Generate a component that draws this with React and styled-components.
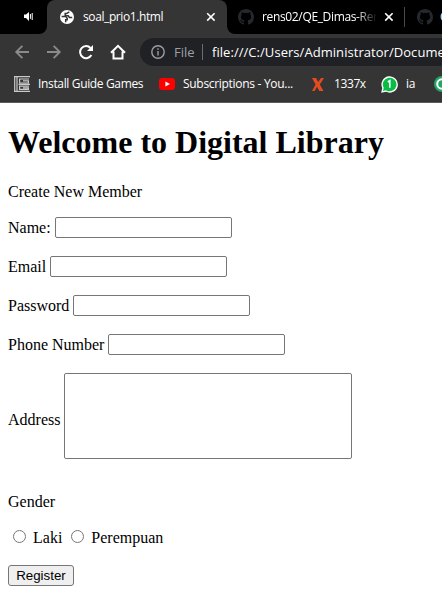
import React from "react";
import styled, { createGlobalStyle } from "styled-components";

const GlobalStyle = createGlobalStyle`
  * { box-sizing: border-box; }
  html, body { margin: 0; background: #fff; overflow: hidden; }
`;

const Window = styled.div`
  width: 442px;
  height: 611px;
  overflow: hidden;
  background: #fff;
`;

const Chrome = styled.header`
  height: 103px;
  background: #353535;
  border-bottom: 1px solid #5a5a5a;
  font-family: "Open Sans", "Noto Sans", sans-serif;
  font-size: 12px;
  color: #fff;
  white-space: nowrap;
  overflow: hidden;
`;

const TabStrip = styled.div`
  height: 34px;
  display: flex;
  background: #353535;
`;

const MutedTab = styled.div`
  width: 47px;
  flex: none;
  padding: 10px 0 0 23px;
  background: #000;
  border-bottom-right-radius: 8px;
`;

const ActiveWrap = styled.div`
  width: 180px;
  flex: none;
  background: #000;
`;

const ActiveTab = styled.div`
  height: 34px;
  display: flex;
  align-items: center;
  padding: 0 11px 0 13px;
  background: #353535;
  border-radius: 8px 8px 0 0;
`;

const IdleTabs = styled.div`
  width: 215px;
  flex: none;
  display: flex;
  align-items: center;
  padding-left: 11px;
  background: #000;
  border-bottom-left-radius: 8px;
  overflow: hidden;
`;

const Label = styled.span`
  flex: none;
  width: ${(p) => p.$width}px;
  margin-left: ${(p) => p.$gap || 8}px;
  line-height: 18px;
  font-size: ${(p) => p.$size || 12}px;
  letter-spacing: ${(p) => p.$tracking || 0}px;
  color: ${(p) => p.$color || "#fff"};
  overflow: hidden;
`;

const FadingLabel = styled(Label)`
  mask-image: linear-gradient(to right, #000 82%, transparent 100%);
`;

const Icon = styled.svg`
  display: block;
  flex: none;
  margin-left: ${(p) => p.$gap || 0}px;
`;

const TabDivider = styled.div`
  flex: none;
  width: 1px;
  height: 20px;
  margin: 0 12px 0 10px;
  background: #4a4a4a;
`;

const Toolbar = styled.div`
  height: 36px;
  display: flex;
  align-items: center;
  padding-left: 14px;
`;

const AddressBar = styled.div`
  width: 310px;
  height: 28px;
  flex: none;
  display: flex;
  align-items: center;
  margin-left: 14px;
  padding-left: 11px;
  background: #202124;
  border-radius: 14px 0 0 14px;
`;

const AddressDivider = styled.div`
  width: 1px;
  height: 16px;
  flex: none;
  background: #6b6c6f;
`;

const Bookmarks = styled.div`
  height: 28px;
  display: flex;
  align-items: center;
  padding-left: 14px;
`;

const Page = styled.main`
  padding: 21px 8px 0;
  font-family: "Liberation Serif", "Times New Roman", serif;
  font-size: 16px;
  line-height: 18px;
  color: #000;
`;

const Title = styled.h1`
  margin: 0 0 22px;
  font-size: 32px;
  line-height: 37px;
  white-space: nowrap;
`;

const Text = styled.p`
  margin: 0;
`;

const Form = styled.form`
  display: flex;
  flex-direction: column;
  align-items: flex-start;
  gap: 18px;
  margin-top: 16px;
`;

const Field = styled.label`
  display: flex;
  align-items: center;
  gap: 4px;
`;

const TallCaption = styled.span`
  padding-top: 7px;
`;

const Input = styled.input`
  width: 177px;
  height: 21px;
  margin: 0;
  padding: 1px 2px;
  border: 1px solid #767676;
  border-radius: 2px;
  background: #fff;
`;

const TextArea = styled.textarea`
  display: block;
  width: 288px;
  height: 86px;
  margin: 0;
  border: 1px solid #767676;
  border-radius: 2px;
  resize: none;
`;

const Gender = styled.div`
  margin-top: 16px;
`;

const Options = styled.div`
  display: flex;
  margin-top: 18px;
`;

const Option = styled.label`
  display: flex;
  align-items: flex-start;
  margin-right: 4px;
`;

const Radio = styled.input`
  width: 13px;
  height: 13px;
  margin: 1px 7px 0 5px;
`;

const Register = styled.button`
  width: 66px;
  height: 21px;
  padding: 0;
  border: 1px solid #767676;
  border-radius: 3px;
  background: #efefef;
  color: #000;
  font: 13.333px/18px "Liberation Sans", Arial, sans-serif;
`;

const Close = ({ gap }) => (
  <Icon $gap={gap} width="10" height="10" viewBox="0 0 10 10" stroke="#fff" strokeWidth="1.6">
    <path d="M1.2 1.2l7.4 7.4M8.6 1.2L1.2 8.6" />
  </Icon>
);

const Github = () => (
  <Icon width="16" height="16" viewBox="0 0 16 16" fill="#24292f">
    <path d="M8 0C3.58 0 0 3.58 0 8c0 3.54 2.29 6.53 5.47 7.59.4.07.55-.17.55-.38v-1.49c-2.01.37-2.53-.49-2.69-.94-.09-.23-.48-.94-.82-1.13-.28-.15-.68-.52-.01-.53.63-.01 1.08.58 1.23.82.72 1.21 1.87.87 2.33.66.07-.52.28-.87.51-1.07-1.78-.2-3.64-.89-3.64-3.95 0-.87.31-1.59.82-2.15-.08-.2-.36-1.02.08-2.12 0 0 .67-.21 2.2.82a7.6 7.6 0 014 0c1.53-1.04 2.2-.82 2.2-.82.44 1.1.16 1.92.08 2.12.51.56.82 1.27.82 2.15 0 3.07-1.87 3.75-3.65 3.95.29.25.54.73.54 1.48v2.2c0 .21.15.46.55.38A8 8 0 0016 8c0-4.42-3.58-8-8-8z" />
  </Icon>
);

const Speaker = () => (
  <Icon width="12" height="12" viewBox="0 0 12 12" fill="none" stroke="#fff">
    <path d="M1 4.5h2L6 2v9L3 8H1z" fill="#fff" stroke="none" />
    <path d="M7.4 4v4.8M9.2 3v7" strokeWidth="1" />
  </Icon>
);

const Globe = () => (
  <Icon width="14" height="14" viewBox="0 0 14 14">
    <circle cx="7" cy="7" r="7" fill="#fff" />
    <path d="M9.3 1.8L6.6 3.6H5.2v2.2h3l1.2 1.6h2.8" fill="none" stroke="#353535" strokeWidth="1.5" />
    <path d="M1.6 6.6l4.2 0 1.4 1.6v1.6H5.7v2.4" fill="none" stroke="#353535" strokeWidth="1.5" />
  </Icon>
);

const Arrow = ({ gap, flip }) => (
  <Icon $gap={gap} width="16" height="16" viewBox="0 0 16 16" fill="none" stroke="#8b8b8b" strokeWidth="1.8">
    <path d={flip ? "M1 8h12.6M7.6 1.8L13.8 8l-6.2 6.2" : "M15 8H2.4M8.4 1.8L2.2 8l6.2 6.2"} />
  </Icon>
);

const fields = ["Name:", "Email", "Password", "Phone Number"];

export default function App() {
  return (
    <Window>
      <GlobalStyle />
      <Chrome>
        <TabStrip>
          <MutedTab><Speaker /></MutedTab>
          <ActiveWrap>
            <ActiveTab>
              <Globe />
              <Label $width={123} $gap={9} $tracking={-0.4}>soal_prio1.html</Label>
              <Close />
            </ActiveTab>
          </ActiveWrap>
          <IdleTabs>
            <Github />
            <FadingLabel $width={115} $tracking={-0.35}>rens02/QE_Dimas-Ren</FadingLabel>
            <Close gap={7} />
            <TabDivider />
            <Github />
            <Label $width={20} $gap={7}>G</Label>
          </IdleTabs>
        </TabStrip>
        <Toolbar>
          <Arrow />
          <Arrow gap={16} flip />
          <Icon $gap={17} width="14" height="16" viewBox="0 0 14 16" fill="none">
            <path d="M12.4 11A6 6 0 1 1 11.5 4" stroke="#fff" strokeWidth="2" />
            <path d="M14 1v6H8z" fill="#fff" />
          </Icon>
          <Icon $gap={17} width="16" height="16" viewBox="0 0 16 16" fill="none" stroke="#fff" strokeWidth="2">
            <path d="M1 8.7L8 1.8l7 6.9M3.5 7.5v7h9v-7" />
          </Icon>
          <AddressBar>
            <Icon width="14" height="14" viewBox="0 0 14 14" fill="none" stroke="#9aa0a6" strokeWidth="1.4">
              <circle cx="7" cy="7" r="6.2" />
              <path d="M7 6v4.4M7 3.3v1.5" />
            </Icon>
            <Label $width={28} $gap={9} $size={13} $color="#9aa0a6">File</Label>
            <AddressDivider />
            <Label $width={240} $gap={9} $size={13} $tracking={0.05}>file:///C:/Users/Administrator/Documents</Label>
          </AddressBar>
        </Toolbar>
        <Bookmarks>
          <Icon width="16" height="16" viewBox="0 0 16 16" fill="none" stroke="#c9c9c9" strokeWidth="1.2">
            <path d="M.7 .7v14.6M3 .7v14.6M0 .7h16M0 15.3h16M15 3H5.6v4H14.4V4.8H9M4.5 8.3H16M15 10.2H5.6v3.2h8.8V11.9H9" />
          </Icon>
          <Label $width={113} $tracking={-0.35}>Install Guide Games</Label>
          <Icon $gap={8} width="16" height="12" viewBox="0 0 16 12">
            <rect width="16" height="12" rx="3" fill="#f00" />
            <path d="M6.4 3.4v5.2L11 6z" fill="#fff" />
          </Icon>
          <Label $width={120} $tracking={-0.3}>Subscriptions - You...</Label>
          <Icon $gap={9} width="12" height="13" viewBox="0 0 12 13">
            <path d="M0 0h4l2.2 4L9 0h3L7.8 6.4 11.5 13H7.3L5 8.7 2.7 13H0l3.6-6.6z" fill="#e44b20" />
          </Icon>
          <Label $width={37} $gap={10} $tracking={-0.4}>1337x</Label>
          <Icon $gap={10} width="17" height="17" viewBox="0 0 17 17">
            <path d="M1.1 15.9l.9-4A7.5 7.5 0 1 1 5 15z" fill="#08bd45" stroke="#fff" strokeWidth="1.4" />
            <path d="M6.8 6l2-1.3v7" fill="none" stroke="#fff" strokeWidth="1.6" />
          </Icon>
          <Label $width={20} $tracking={-0.3}>ia</Label>
          <Icon $gap={8} width="16" height="16" viewBox="0 0 16 16">
            <circle cx="8" cy="8" r="8" fill="#23a566" />
            <circle cx="8" cy="8" r="4.8" fill="none" stroke="#fff" strokeWidth="2" />
          </Icon>
        </Bookmarks>
      </Chrome>
      <Page>
        <Title>Welcome to Digital Library</Title>
        <Text>Create New Member</Text>
        <Form>
          {fields.map((name) => (
            <Field key={name}>
              {name}
              <Input type={name === "Password" ? "password" : "text"} />
            </Field>
          ))}
          <Field>
            <TallCaption>Address</TallCaption>
            <TextArea />
          </Field>
          <Gender>
            <Text>Gender</Text>
            <Options>
              <Option><Radio type="radio" name="gender" />Laki</Option>
              <Option><Radio type="radio" name="gender" />Perempuan</Option>
            </Options>
          </Gender>
          <Register type="button">Register</Register>
        </Form>
      </Page>
    </Window>
  );
}
